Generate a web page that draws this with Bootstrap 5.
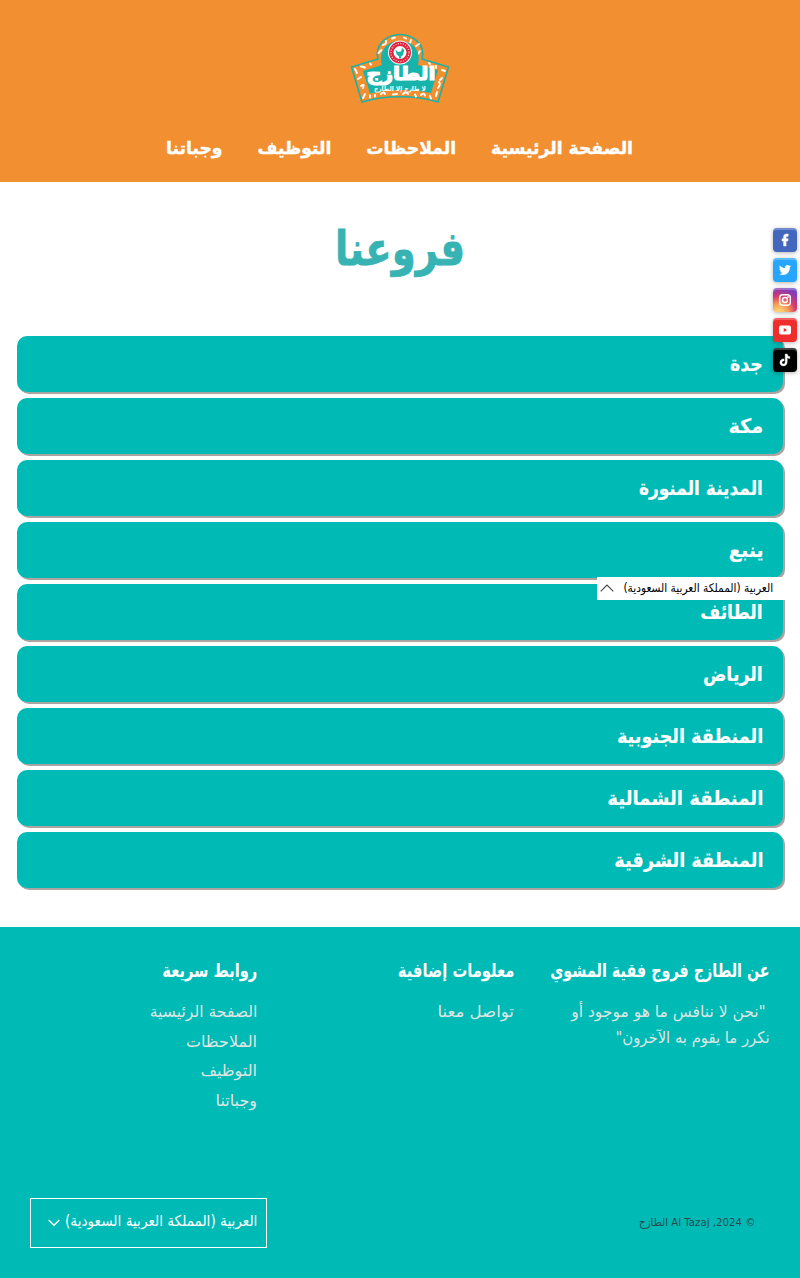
<!DOCTYPE html>
<html lang="ar" dir="rtl">
<head>
<meta charset="utf-8">
<meta name="viewport" content="width=device-width, initial-scale=1">
<title>فروعنا</title>
<link href="https://cdn.jsdelivr.net/npm/bootstrap@5.3.0/dist/css/bootstrap.min.css" rel="stylesheet">
<style>
:root{--teal:#00bab5;--orange:#f28f30}
body{font-family:"DejaVu Sans","Liberation Sans",sans-serif;background:#fff;color:#000;height:1278px;overflow:hidden}
a{text-decoration:none;color:inherit}
.site-head{background:var(--orange);height:182px;padding-top:33px}
.site-head svg{width:100px;height:71px}
.menu{gap:35px;margin-top:29px;font-size:17.2px;font-weight:700;color:#fff;line-height:30px;-webkit-text-stroke:.4px #fff}
.menu .fx{position:relative;left:-.5px}
.fx{display:block;white-space:nowrap}
.sx{display:inline-block;white-space:nowrap;transform:scaleX(var(--s,1));transform-origin:100% 50%}
.page-title{color:#38b3b3;font-size:47px;font-weight:700;line-height:60px;margin:37px 0 0;height:117px;-webkit-text-stroke:.8px #38b3b3}
.page-title .sx{--s:.822;transform-origin:50% 50%}
.branches{padding:0 17px;gap:6px}
.branch{background:var(--teal);color:#fff;height:56px;border-radius:10px;box-shadow:2px 2px #aaa5a3;padding-right:20px;font-size:20px;font-weight:700;-webkit-text-stroke:.2px #fff}
.site-foot{background:var(--teal);margin-top:39px;height:351px;padding:28px 30px 30px;color:#fff}
.foot-cols{height:190px}
.foot-cols section{width:257px;flex:none}
.foot-cols section:first-child{width:256px}
.foot-cols section:last-child{width:227px}
.foot-title{font-size:19px;font-weight:700;line-height:30px;margin:0 0 14px;white-space:nowrap;width:220px}
.foot-text{color:#dfe6e4;font-size:16px;line-height:26px}
.foot-links{line-height:29.6px;margin-top:-2px}
.lang-box{width:237px;height:50px;border:1px solid #fff;padding:0 9px 4px 17px;font-size:15px}
.lang-box .fx{width:192px;text-align:right}
.copy{font-size:11px;color:#274b50;padding-right:15px}
.social{left:773px;top:228px;gap:6px}
.social a{width:24px;height:24px;border-radius:4px;box-shadow:inset 0 2px rgba(255,255,255,.25),0 1px 4px rgba(0,0,0,.3)}
.social svg{display:block;width:24px;height:24px;fill:#fff}
.insta{background:radial-gradient(circle at 25% 105%,#fdd074 0 10%,#f9a055 30%,#d63a6d 55%,#8a3ab0 78%,#5a50d0 100%)}
.lang-tip{left:597px;top:577px;width:203px;height:23px;background:#fff;font-size:12px;padding:0 27px 1px 3px}
.lang-tip .fx{width:149px}
</style>
</head>
<body class="position-relative">
<header class="site-head d-flex flex-column align-items-center">
  <a href="#"><svg viewBox="0 0 100 71" class="d-block">
    <path d="M1.500 34 28 26C24 11 38 1.500 50 1.500s26 9.500 22 24.500l26.500 8-10.500 35C66 62 34 62 12 69Z" fill="#f28f30" stroke="#18b3aa" stroke-width="1.600"/>
    <g fill="none" stroke="#fff" stroke-width="1.900" stroke-linecap="round">
      <path d="M5 36l2 4M11 33.500l4 1M20 30.500l1 1M8 46l3-2M11 53q4-3 2 2M15 61l-2 4M20 62.500v2M25 62v1.500M31 61q3-3 4 0M43 61.500l4-.5M53 61q3-3 5 0M65 61.500l1 2M71 62q3-3 4 .500M80 63l1 2.500M86 63l1-4M88 55q3-4 1-6M92 45l-2 2M95 38l-3-1M86 33v2M79 30l1 1M28.500 20l3-3M33 12q4-1 3-4M42 5.500l3-1M54 4.500l2 1M61 7l-1 3M66 13l3-2M68 21l2-3"/></g>
    <path d="M13 38 32 32C28 16 39 8 50 8s22 8 18 24l20 5-7 23C62 56 39 56 20 60.500Z" fill="#18b3aa"/>
    <circle cx="50" cy="19.500" r="12" fill="#fff"/><circle cx="50" cy="19.500" r="11" fill="#e02540"/>
    <circle cx="50" cy="19.500" r="9" fill="none" stroke="#fff" stroke-width="1.300" stroke-dasharray="1 1.500" opacity=".75"/>
    <circle cx="50" cy="19.500" r="6.500" fill="#fff"/><path d="M45.500 16.500l2.500 2.500 3-.5 1.200-3.500 2 2-1.200 5-2 1.500v2h-2v-2l-2.500-2.500Z" fill="#18b3aa"/>
    <text x="51" y="46.500" text-anchor="middle" textLength="69" lengthAdjust="spacingAndGlyphs" font-size="19" font-weight="700" fill="#fff" stroke="#fff" stroke-width="1.200">الطازج</text>
    <text x="50" y="57.500" text-anchor="middle" textLength="52" lengthAdjust="spacingAndGlyphs" font-size="6.500" font-weight="700" fill="#fff">لا طازج إلا الطازج</text>
  </svg></a>
  <nav class="menu d-flex">
    <a class="fx" href="#">الصفحة الرئيسية</a><a class="fx" href="#">الملاحظات</a><a class="fx" href="#">التوظيف</a><a class="fx" href="#">وجباتنا</a>
  </nav>
</header>
<main>
  <h1 class="page-title text-center"><span class="sx">فروعنا</span></h1>
  <div class="branches d-flex flex-column">
    <a class="branch d-flex align-items-center" href="#"><span class="sx" style="--s:.87">جدة</span></a>
    <a class="branch d-flex align-items-center" href="#"><span class="sx" style="--s:.96">مكة</span></a>
    <a class="branch d-flex align-items-center" href="#"><span class="sx" style="--s:.85">المدينة المنورة</span></a>
    <a class="branch d-flex align-items-center" href="#"><span class="sx" style="--s:.93">ينبع</span></a>
    <a class="branch d-flex align-items-center" href="#"><span class="sx" style="--s:.86">الطائف</span></a>
    <a class="branch d-flex align-items-center" href="#"><span class="sx" style="--s:.87">الرياض</span></a>
    <a class="branch d-flex align-items-center" href="#"><span class="sx" style="--s:.88">المنطقة الجنوبية</span></a>
    <a class="branch d-flex align-items-center" href="#"><span class="sx" style="--s:.905">المنطقة الشمالية</span></a>
    <a class="branch d-flex align-items-center" href="#"><span class="sx" style="--s:.88">المنطقة الشرقية</span></a>
  </div>
</main>
<footer class="site-foot d-flex flex-column justify-content-between">
  <div class="foot-cols d-flex">
    <section><h2 class="foot-title"><span class="sx" style="--s:.755">عن الطازج فروج فقية المشوي</span></h2><p class="foot-text m-0"><span class="fx"><span class="sx pe-1" style="--s:.97">"نحن لا ننافس ما هو موجود أو</span></span><span class="fx"><span class="sx" style="--s:.925">نكرر ما يقوم به الآخرون"</span></span></p></section>
    <section><h2 class="foot-title"><span class="sx" style="--s:.775">معلومات إضافية</span></h2><a class="foot-text fx" href="#"><span class="sx" style="--s:1.035">تواصل معنا</span></a></section>
    <section><h2 class="foot-title"><span class="sx" style="--s:.77">روابط سريعة</span></h2><div class="foot-text foot-links"><a class="fx" href="#"><span class="sx" style="--s:.975">الصفحة الرئيسية</span></a><a class="fx" href="#">الملاحظات</a><a class="fx" href="#">التوظيف</a><a class="fx" href="#">وجباتنا</a></div></section>
  </div>
  <div class="d-flex justify-content-between align-items-center">
    <span class="copy"><span class="sx" style="--s:.928">© 2024, Al Tazaj الطازج</span></span>
    <button class="lang-box bg-transparent text-white d-flex align-items-center justify-content-between"><span class="fx"><span class="sx" style="--s:.91">العربية (المملكة العربية السعودية)</span></span><svg class="mt-1 flex-shrink-0" width="12" height="8" viewBox="0 0 12 8" fill="none" stroke="#fff" stroke-width="1.5"><path d="M.7 1 6 6.300 11.300 1"/></svg></button>
  </div>
</footer>
<div class="lang-tip position-absolute d-flex align-items-center justify-content-between"><span class="fx"><span class="sx" style="--s:.885">العربية (المملكة العربية السعودية)</span></span><svg class="flex-shrink-0" width="14" height="8" viewBox="0 0 14 8" fill="none" stroke="#444" stroke-width="1.100"><path d="M.7 7.300 7 1 13.300 7.300"/></svg></div>
<div class="social position-absolute d-flex flex-column">
  <a href="#" style="background:#4267bc"><svg viewBox="0 0 24 24"><path stroke="#fff" stroke-width=".5" d="M10.600 18v-5H9v-2.200h1.600V9.200c0-2 1-3.100 2.900-3.100h1.700v2.200H14c-.7 0-.9.300-.9 1v1.500h2.100l-.3 2.200h-1.800v5Z"/></svg></a>
  <a href="#" style="background:#26a6ff"><svg viewBox="0 0 24 24"><path d="M18 8.300l-1.200 1.200c.1 4-2.700 7.500-6.800 7.500-1.500 0-2.900-.4-4-1.100 1.300.1 2.600-.3 3.600-1-1.100 0-2-.8-2.300-1.700h1.100c-1.200-.3-2-1.300-2-2.500l1.100.3C6.400 10.300 6.100 8.700 6.800 7.500c1.300 1.600 3.100 2.500 5.200 2.600-.4-1.700.9-3.100 2.400-3.100.7 0 1.300.3 1.800.8l1.600-.6-1.100 1.400Z"/></svg></a>
  <a href="#" class="insta"><svg viewBox="0 0 24 24" style="fill:none" stroke="#fff" stroke-width="1.400"><rect x="6.700" y="6.700" width="10.600" height="10.600" rx="3"/><circle cx="12" cy="12" r="2.500"/><circle cx="15" cy="9" r=".3"/></svg></a>
  <a href="#" style="background:#f02d2d"><svg viewBox="0 0 24 24"><path fill-rule="evenodd" d="M8 7.500h8q2 0 2 2v5q0 2-2 2H8q-2 0-2-2v-5q0-2 2-2Zm2.700 2.500v4l3.500-2Z"/></svg></a>
  <a href="#" style="background:#000"><svg viewBox="0 0 24 24"><path stroke="#fff" stroke-width=".4" d="M12.200 6h2c.2 1.600 1.100 2.500 2.600 2.600v2c-1 0-1.800-.3-2.600-.8V14c0 2.400-1.500 3.900-3.700 3.900-2.100 0-3.600-1.500-3.600-3.500 0-2.200 1.700-3.700 4.100-3.500v2.100c-1.200-.2-2 .4-2 1.400 0 .9.600 1.500 1.500 1.500 1.100 0 1.700-.7 1.700-2Z"/></svg></a>
</div>
</body>
</html>
